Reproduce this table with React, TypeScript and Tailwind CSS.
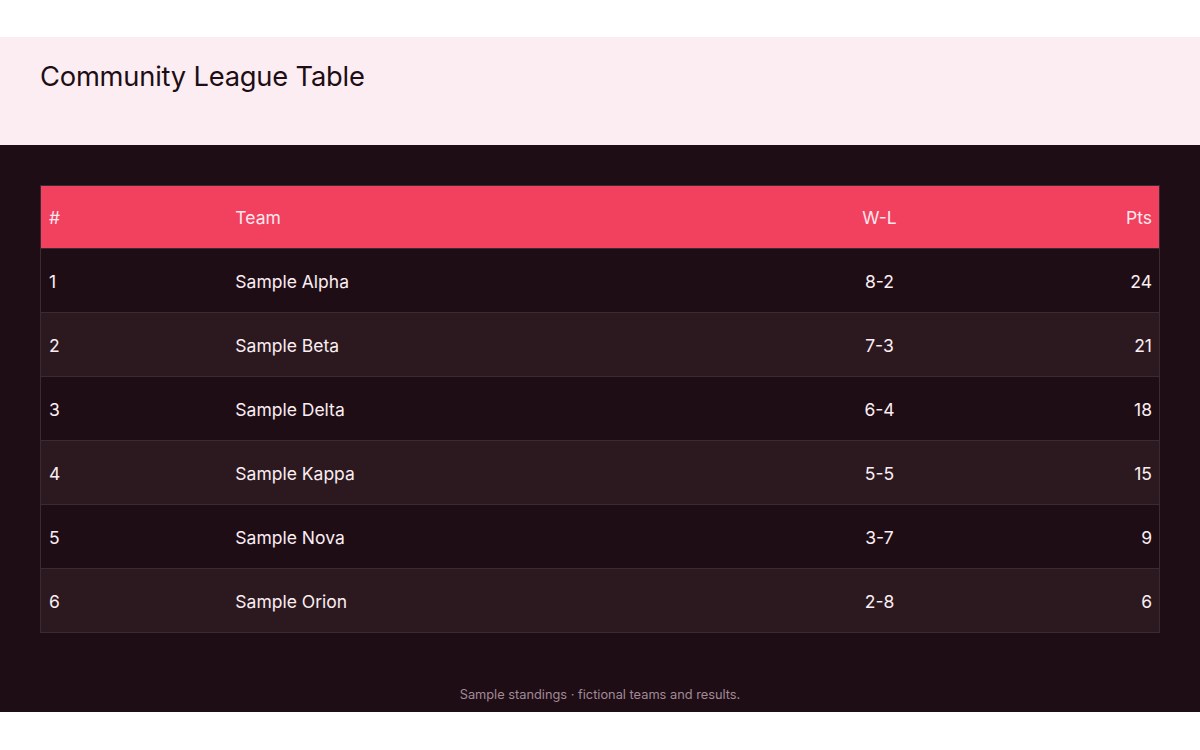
const rows = [
  { pos: 1, team: 'Sample Alpha', wl: '8-2', pts: 24 },
  { pos: 2, team: 'Sample Beta', wl: '7-3', pts: 21 },
  { pos: 3, team: 'Sample Delta', wl: '6-4', pts: 18 },
  { pos: 4, team: 'Sample Kappa', wl: '5-5', pts: 15 },
  { pos: 5, team: 'Sample Nova', wl: '3-7', pts: 9 },
  { pos: 6, team: 'Sample Orion', wl: '2-8', pts: 6 },
];

export default function App() {
  return (
    <div className="w-[1200px] h-[750px] bg-white font-['Inter',sans-serif]">
      <div className="h-[37px]" />
      <header className="h-[108px] bg-[#fcedf2] px-10 pt-[26px]">
        <h1 className="text-[27.3px] leading-[28px] text-[#1f0d16] tracking-[-0.2px]">
          Community League Table
        </h1>
      </header>
      <main className="h-[567px] bg-[#1f0d16] px-10 pt-10 flex flex-col">
        <div className="border border-[#3a2a31]">
          <div className="grid grid-cols-[1fr_3fr_1fr_1fr] h-[62px] pt-[2px] items-center bg-[#f2405f] text-[#fde8ee] text-[17.5px]">
            <div className="px-2">#</div>
            <div className="px-2">Team</div>
            <div className="px-2 text-center">W-L</div>
            <div className="pl-2 pr-[7px] text-right">Pts</div>
          </div>
          {rows.map((r, i) => (
            <div
              key={r.pos}
              className={
                'grid grid-cols-[1fr_3fr_1fr_1fr] h-[64px] pt-[3px] items-center text-[17.5px] text-[#fbeef2] border-t border-[#3a2a31] ' +
                (i % 2 === 1 ? 'bg-[#2c1920]' : 'bg-[#1f0d16]')
              }
            >
              <div className="px-2">{r.pos}</div>
              <div className="px-2">{r.team}</div>
              <div className="px-2 text-center">{r.wl}</div>
              <div className="pl-2 pr-[7px] text-right">{r.pts}</div>
            </div>
          ))}
        </div>
        <p className="mt-auto mb-[8px] text-center text-[12.8px] text-[#a08a94]">
          Sample standings · fictional teams and results.
        </p>
      </main>
    </div>
  );
}
